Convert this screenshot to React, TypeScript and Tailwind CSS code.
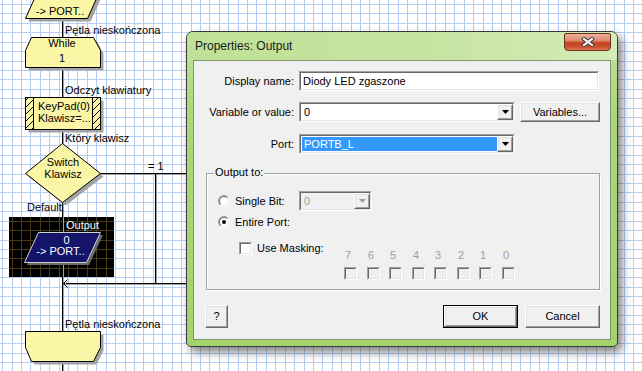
import React from "react";

const STEP = 9.42;
const gridXs: number[] = [];
for (let k = 0; 2.1 + k * STEP < 642; k++) gridXs.push(Math.round(2.1 + k * STEP));
const gridYs: number[] = [];
for (let k = 0; 4 + k * STEP < 371; k++) gridYs.push(Math.round(4 + k * STEP));

const FONT = "'Liberation Sans', Arial, sans-serif";
const YELLOW = "#fbf6a6";
const SHADOW = "#a3a3a3";

function T({ x, y, children, anchor = "start", fill = "#000" }: { x: number; y: number; children: React.ReactNode; anchor?: "start" | "middle"; fill?: string }) {
  return (
    <text x={x} y={y} fontSize={11} fontFamily={FONT} textAnchor={anchor} fill={fill}>
      {children}
    </text>
  );
}

function Shape({ pts }: { pts: string }) {
  const shifted = pts
    .split(" ")
    .map((p) => {
      const [a, b] = p.split(",").map(Number);
      return `${a + 3},${b + 3}`;
    })
    .join(" ");
  return (
    <>
      <polygon points={shifted} fill={SHADOW} />
      <polygon points={pts} fill={YELLOW} stroke="#000" strokeWidth={1} />
    </>
  );
}

function Canvas() {
  return (
    <svg className="absolute left-0 top-0" width={642} height={371}>
      <defs>
        <pattern id="hatch" width="7" height="7" patternUnits="userSpaceOnUse">
          <rect width="7" height="7" fill={YELLOW} />
          <path d="M0,7 L7,0" stroke="#000" strokeWidth="1" />
        </pattern>
        <clipPath id="blackclip">
          <rect x="9" y="217" width="105" height="60" />
        </clipPath>
      </defs>
      <g shapeRendering="crispEdges">
        {gridXs.map((x) => (
          <rect key={"gx" + x} x={x} y={0} width={1} height={371} fill="#b6cef4" />
        ))}
        {gridYs.map((y) => (
          <rect key={"gy" + y} x={0} y={y} width={642} height={1} fill="#b6cef4" />
        ))}
      </g>

      {/* black output box */}
      <g shapeRendering="crispEdges">
        <rect x={9} y={217} width={105} height={60} fill="#000" />
        <g clipPath="url(#blackclip)">
          {gridXs.map((x) => (
            <rect key={"bx" + x} x={x} y={217} width={1} height={60} fill="#4a3a17" />
          ))}
          {gridYs.map((y) => (
            <rect key={"by" + y} x={9} y={y} width={105} height={1} fill="#4a3a17" />
          ))}
        </g>
      </g>

      {/* connector lines */}
      <g shapeRendering="crispEdges">
        <rect x={63} y={0} width={1} height={371} fill={SHADOW} />
        <rect x={62} y={0} width={1} height={371} fill="#000" />
        <rect x={100} y={174} width={90} height={1} fill={SHADOW} />
        <rect x={100} y={173} width={90} height={1} fill="#000" />
        <rect x={156} y={174} width={1} height={110} fill={SHADOW} />
        <rect x={155} y={173} width={1} height={111} fill="#000" />
        <rect x={63} y={284} width={127} height={1} fill={SHADOW} />
        <rect x={62} y={283} width={128} height={1} fill="#000" />
      </g>
      <polyline points="68.5,280.5 64.5,284.5 68.5,288.5" fill="none" stroke={SHADOW} strokeWidth={1} />
      <polyline points="67.5,279.5 63.5,283.5 67.5,287.5" fill="none" stroke="#000" strokeWidth={1} />

      {/* top output parallelogram */}
      <Shape pts="39.5,-12.5 101.5,-12.5 87.5,18.5 25.5,18.5" />
      <T x={60} y={15} anchor="middle">-&gt; PORT..</T>
      <T x={65} y={34}>Pętla nieskończona</T>

      {/* while */}
      <Shape pts="31.5,37.5 93.5,37.5 100.5,50.5 100.5,67.5 25.5,67.5 25.5,50.5" />
      <T x={62} y={47} anchor="middle">While</T>
      <T x={62} y={62} anchor="middle">1</T>

      <T x={65} y={94}>Odczyt klawiatury</T>

      {/* keypad macro */}
      <rect x={28.5} y={100.5} width={75} height={32} fill={SHADOW} />
      <rect x={25.5} y={97.5} width={75} height={32} fill="url(#hatch)" stroke="#000" strokeWidth={1} />
      <rect x={33.5} y={97.5} width={59} height={32} fill={YELLOW} stroke="#000" strokeWidth={1} />
      <T x={38} y={110}>KeyPad(0)</T>
      <T x={38} y={122}>Klawisz=...</T>

      <T x={65} y={142}>Który klawisz</T>

      {/* switch */}
      <Shape pts="62.5,143.5 100.5,173.5 62.5,202.5 25.5,173.5" />
      <T x={63} y={166} anchor="middle">Switch</T>
      <T x={63} y={178} anchor="middle">Klawisz</T>
      <T x={148} y={170}>= 1</T>
      <T x={27} y={211}>Default</T>

      {/* output selected */}
      <T x={66} y={229} fill="#fff">Output</T>
      <polygon points="41,235 103,235 89,265 27,265" fill="#6a6a6a" />
      <polygon points="38.5,232.5 100.5,232.5 86.5,262.5 24.5,262.5" fill="#14146a" stroke="#d0d0d0" strokeWidth={1} />
      <T x={66.5} y={244} anchor="middle" fill="#fff">0</T>
      <T x={60.5} y={255} anchor="middle" fill="#fff">-&gt; PORT..</T>

      <T x={65} y={328}>Pętla nieskończona</T>

      {/* end loop */}
      <Shape pts="25.5,331.5 100.5,331.5 100.5,347.5 93.5,361.5 31.5,361.5 25.5,347.5" />
    </svg>
  );
}

function Sunken({ className = "", innerClass = "bg-white", children }: { className?: string; innerClass?: string; children?: React.ReactNode }) {
  return (
    <div className={"flex border border-t-[#a0a0a0] border-l-[#a0a0a0] border-r-white border-b-white " + className}>
      <div className={"flex flex-1 min-w-0 border border-t-[#696969] border-l-[#696969] border-r-[#e3e3e3] border-b-[#e3e3e3] " + innerClass}>
        {children}
      </div>
    </div>
  );
}

function Raised({ className = "", children }: { className?: string; children?: React.ReactNode }) {
  return (
    <div className={"flex border border-t-white border-l-white border-r-[#696969] border-b-[#696969] " + className}>
      <div className="flex flex-1 items-center justify-center border border-t-[#e3e3e3] border-l-[#e3e3e3] border-r-[#a0a0a0] border-b-[#a0a0a0] bg-[#f0f0f0]">
        {children}
      </div>
    </div>
  );
}

function Arrow({ color = "#000" }: { color?: string }) {
  return (
    <svg width="7" height="4" viewBox="0 0 7 4">
      <polygon points="0,0 7,0 3.5,4" fill={color} />
    </svg>
  );
}

function Combo({ className = "", disabled = false, selected = false, value }: { className?: string; disabled?: boolean; selected?: boolean; value: string }) {
  return (
    <Sunken className={"h-[20px] " + className} innerClass={disabled ? "bg-[#f0f0f0]" : "bg-white"}>
      <div className="flex flex-1 min-w-0 p-[1px] pr-0">
        <div className={"flex flex-1 items-center pl-[2px] " + (selected ? "bg-[#3399ff] text-white" : disabled ? "text-[#a0a0a0]" : "")}>{value}</div>
      </div>
      <Raised className="w-[16px]">
        <Arrow color={disabled ? "#a0a0a0" : "#000"} />
      </Raised>
    </Sunken>
  );
}

function Radio({ checked = false }: { checked?: boolean }) {
  return (
    <div className="w-[12px] h-[12px] rounded-full flex border border-t-[#a0a0a0] border-l-[#a0a0a0] border-r-white border-b-white">
      <div className="flex flex-1 items-center justify-center rounded-full bg-white border border-t-[#696969] border-l-[#696969] border-r-[#e3e3e3] border-b-[#e3e3e3]">
        {checked && <div className="w-[4px] h-[4px] rounded-full bg-black" />}
      </div>
    </div>
  );
}

function Check({ disabled = false }: { disabled?: boolean }) {
  return <Sunken className="w-[13px] h-[13px]" innerClass={disabled ? "bg-[#f0f0f0]" : "bg-white"} />;
}

const bitWidths = ["w-[23px]", "w-[22px]", "w-[23px]", "w-[22px]", "w-[23px]", "w-[22px]", "w-[23px]", "w-[13px]"];

function Dialog() {
  return (
    <div className="absolute left-[186px] top-[31px] w-[432px] h-[316px] flex flex-col rounded-t-[7px] rounded-b-[5px] border border-[#3a3a3a] bg-[linear-gradient(to_bottom,#c3e39d_0%,#abd779_25%,#a3d36c_100%)] shadow-[4px_5px_10px_rgba(0,0,0,0.5)] px-[6px] pb-[6px]">
      <div className="flex h-[28px] -mx-[6px] px-[6px] rounded-t-[6px] bg-[linear-gradient(to_right,#bfe196_0%,#c6e4a1_55%,#d3ecb8_100%)]">
        <span className="self-center pl-[2px] pb-[1px] text-[12px] text-[#1a1a1a]">Properties: Output</span>
        <div className="ml-auto mt-[1px] w-[47px] h-[18px] flex items-center justify-center rounded-b-[4px] rounded-t-[2px] border border-[#6b3022] bg-[linear-gradient(to_bottom,#eab09c_0%,#e08c70_40%,#c4441f_55%,#c8502c_80%,#e07a55_100%)]">
          <svg width="14" height="10" viewBox="0 0 14 10">
            <path d="M3 2 L11 8 M11 2 L3 8" stroke="#3c3c3c" strokeWidth="4" strokeLinecap="square" />
            <path d="M3 2 L11 8 M11 2 L3 8" stroke="#fff" strokeWidth="2" strokeLinecap="square" />
          </svg>
        </div>
      </div>
      <div className="flex-1 flex flex-col border border-[#7d966f] bg-[#f0f0f0] pt-[10px] text-[11px] leading-[13px]">
        <div className="flex items-center h-[20px]">
          <div className="w-[100px] text-right">Display name:</div>
          <Sunken className="ml-[5px] w-[300px] h-[20px]">
            <div className="flex items-center pl-[2px]">Diody LED zgaszone</div>
          </Sunken>
        </div>
        <div className="mt-[11px] flex items-center h-[20px]">
          <div className="w-[100px] text-right">Variable or value:</div>
          <Combo className="ml-[5px] w-[216px]" value="0" />
          <Raised className="ml-[5px] w-[80px] h-[20px]">Variables...</Raised>
        </div>
        <div className="mt-[12px] flex items-center h-[20px]">
          <div className="w-[100px] text-right">Port:</div>
          <Combo className="ml-[5px] w-[216px]" value="PORTB_L" selected />
        </div>

        <div className="relative mt-[19px] ml-[12px] w-[394px] h-[117px] border border-[#a0a0a0] shadow-[inset_1px_1px_0_#fff,1px_1px_0_#fff] pl-[11px] pt-[17px]">
          <span className="absolute left-[7px] top-[-8px] px-[1px] bg-[#f0f0f0]">Output to:</span>
          <div className="flex items-center h-[20px]">
            <Radio />
            <div className="ml-[5px] w-[64px]">Single Bit:</div>
            <Combo className="w-[73px]" value="0" disabled />
          </div>
          <div className="mt-[1px] flex items-center h-[20px]">
            <Radio checked />
            <div className="ml-[5px]">Entire Port:</div>
          </div>
          <div className="mt-[10px] ml-[21px] flex items-start">
            <div className="w-[105px] h-[13px] flex items-center">
              <Check />
              <span className="ml-[5px]">Use Masking:</span>
            </div>
            <div className="mt-[7px] flex">
              {[7, 6, 5, 4, 3, 2, 1, 0].map((b, i) => (
                <div key={b} className={"flex flex-col " + bitWidths[i]}>
                  <span className="pl-[1px] text-[#a0a0a0]">{b}</span>
                  <div className="mt-[5px]">
                    <Check disabled />
                  </div>
                </div>
              ))}
            </div>
          </div>
        </div>

        <div className="mt-[15px] flex h-[23px] pl-[11px] pr-[10px]">
          <Raised className="w-[23px] h-[23px]">?</Raised>
          <div className="ml-auto w-[75px] h-[23px] flex border border-black">
            <Raised className="flex-1">OK</Raised>
          </div>
          <Raised className="ml-[7px] w-[75px] h-[23px]">Cancel</Raised>
        </div>
      </div>
    </div>
  );
}

export default function App() {
  return (
    <div className="relative w-[642px] h-[371px] overflow-hidden bg-white font-['Liberation_Sans',Arial,sans-serif] text-black">
      <Canvas />
      <Dialog />
    </div>
  );
}
